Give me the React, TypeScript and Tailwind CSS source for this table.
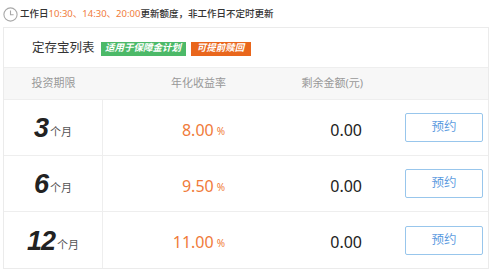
import React from "react";

const rows = [
  { term: "3", rate: "8.00", left: "0.00" },
  { term: "6", rate: "9.50", left: "0.00" },
  { term: "12", rate: "11.00", left: "0.00" },
];

const Clock = () => (
  <svg width="15" height="15" viewBox="0 0 15 15" fill="none">
    <circle cx="7.5" cy="7.5" r="6.6" stroke="#a8a8a8" strokeWidth="1.1" />
    <path d="M7.5 3.4V7.8H10.6" stroke="#a8a8a8" strokeWidth="1.1" />
  </svg>
);

export default function App() {
  return (
    <div
      className="w-[501px] h-[276px] bg-white text-[#333]"
      style={{ fontFamily: '"Noto Sans", "Noto Sans CJK SC", sans-serif' }}
    >
      {/* update notice */}
      <div className="flex items-center h-[27px] pl-[3px] pt-[1px] gap-[2px] text-[9.5px] text-[#333] font-medium">
        <Clock />
        <span>
          工作日<span className="text-[#f07b3a] font-normal">10:30、14:30、20:00</span>更新额度，非工作日不定时更新
        </span>
      </div>

      <div className="ml-[3px] w-[486px] border border-[#ebebeb]">
        {/* title */}
        <div className="flex items-center h-[39px] pl-[28px] pt-[2px]">
          <span className="text-[12.5px] text-[#333]">定存宝列表</span>
          <span className="ml-[6px] w-[85px] h-[14px] flex items-center justify-center bg-[#4cb968] text-white text-[9.5px] font-bold italic">
            适用于保障金计划
          </span>
          <span className="ml-[5px] w-[60px] h-[14px] flex items-center justify-center bg-[#e9661c] text-white text-[9.5px] font-bold italic">
            可提前赎回
          </span>
        </div>

        {/* header */}
        <div className="flex items-center h-[33px] bg-[#f7f7f7] border-t border-b border-[#eeeeee] text-[11px] text-[#999]">
          <div className="w-[99px] text-center">投资期限</div>
          <div className="w-[123px] text-right">年化收益率</div>
          <div className="w-[137px] text-right">剩余金额(元)</div>
        </div>

        {/* rows */}
        {rows.map((r, i) => (
          <div
            key={r.term}
            className={`flex items-stretch h-[56px] ${i < rows.length - 1 ? "border-b border-[#eeeeee]" : ""}`}
          >
            <div className="w-[99px] flex items-center justify-center border-r border-[#eeeeee] pt-[2px]">
              <span
                className="text-[27px] font-bold italic text-[#222] leading-none"
                style={{ fontFamily: '"Liberation Sans", sans-serif', letterSpacing: "-1px" }}
              >
                {r.term}
              </span>
              <span className="ml-[2px] mt-[8px] text-[11px] text-[#555]">个月</span>
            </div>
            <div className="w-[122px] flex items-center justify-end pt-[4px]">
              <span className="text-[16px] text-[#f07b3a]">{r.rate}</span>
              <span className="ml-[3px] mt-[3px] text-[10px] text-[#f07b3a]">%</span>
            </div>
            <div className="w-[137px] flex items-center justify-end pt-[4px]">
              <span className="text-[16px] text-[#222]">{r.left}</span>
            </div>
            <div className="flex items-center pl-[43px]">
              <button className="w-[78px] h-[29px] border border-[#98c6ec] rounded-[2px] text-[12.5px] text-[#5f9ddf] bg-white">
                预约
              </button>
            </div>
          </div>
        ))}
      </div>
    </div>
  );
}
